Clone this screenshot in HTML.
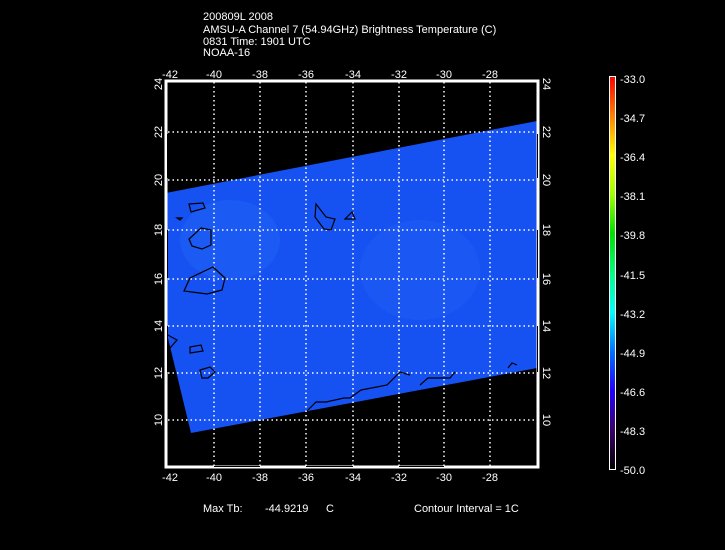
<html><head><style>body{margin:0;background:#000;width:725px;height:550px;overflow:hidden}
text{font-family:"Liberation Sans",sans-serif;font-size:11px;fill:#fff}</style></head><body>
<svg width="725" height="550" xmlns="http://www.w3.org/2000/svg">
<defs>
<linearGradient id="cb" x1="0" y1="1" x2="0" y2="0">
<stop offset="0" stop-color="#000"/><stop offset="0.1" stop-color="#3a0066"/><stop offset="0.2" stop-color="#2000ff"/><stop offset="0.3" stop-color="#0070ff"/><stop offset="0.4" stop-color="#00ffff"/><stop offset="0.5" stop-color="#00ff80"/><stop offset="0.6" stop-color="#00e000"/><stop offset="0.7" stop-color="#a0ff00"/><stop offset="0.8" stop-color="#ffff00"/><stop offset="0.9" stop-color="#ff8000"/><stop offset="1" stop-color="#ff0000"/>
</linearGradient>
</defs>
<text x="203" y="20">200809L 2008</text>
<text x="203" y="33">AMSU-A Channel 7 (54.94GHz) Brightness Temperature (C)</text>
<text x="203" y="45">0831 Time: 1901 UTC</text>
<text x="203" y="56">NOAA-16</text>
<polygon points="166,193 537,121 537,368 191,433 166,330" fill="#1652f2"/>
<ellipse cx="230" cy="240" rx="50" ry="40" fill="#2262f6" opacity="0.5"/>
<ellipse cx="420" cy="270" rx="60" ry="50" fill="#2262f6" opacity="0.4"/>
<g stroke="#fff" stroke-width="1.5" stroke-dasharray="1.5,3" fill="none">
<path d="M214 82V466M260 82V466M306 82V466M353 82V466M399 82V466M444 82V466M490 82V466"/>
<path d="M168 132H536M168 180H536M168 230H536M168 279H536M168 326H536M168 373H536M168 420H536"/>
</g>
<g stroke="#000" stroke-width="1.2" fill="none">
<path d="M189 204L203 203L205 208L191 212Z"/><path d="M177 218L182 218L180 220Z"/>
<path d="M201 228L211 230L211 245L202 249L192 246L189 239Z"/>
<path d="M213 267L225 278L222 290L207 294L184 291L190 278Z"/>
<path d="M316 204L326 217L335 219L331 230L324 229L315 217Z"/><path d="M352 212L355 219L345 219Z"/>
<path d="M190 347L201 345L203 351L190 353Z"/><path d="M200 370L210 367L215 372L208 378L202 378Z"/>
<path d="M166 334L177 340L170 348"/>
<path d="M307 411L316 402L326 402L344 398L350 398L361 390L387 385L400 372L410 375"/>
<path d="M420 385L428 378L450 378L455 372"/><path d="M508 368L512 363L517 365"/>
</g>
<rect x="166" y="81" width="372" height="386" stroke-width="3" fill="none" stroke="#fff"/>
<g stroke="#000" stroke-width="1"><path d="M537.5 134V178M537.5 230V278M537.5 326V372M167.5 134V178M167.5 230V278M167.5 326V372"/><path d="M214 466.5H260M306 466.5H353M399 466.5H444"/></g>
<g text-anchor="middle">
<text x="170" y="78">-42</text><text x="214" y="78">-40</text><text x="260" y="78">-38</text><text x="306" y="78">-36</text><text x="353" y="78">-34</text><text x="399" y="78">-32</text><text x="444" y="78">-30</text><text x="490" y="78">-28</text>
<text x="170" y="481">-42</text><text x="214" y="481">-40</text><text x="260" y="481">-38</text><text x="306" y="481">-36</text><text x="353" y="481">-34</text><text x="399" y="481">-32</text><text x="444" y="481">-30</text><text x="490" y="481">-28</text>
</g>
<g text-anchor="middle">
<text transform="translate(162,84) rotate(-90)">24</text><text transform="translate(162,132) rotate(-90)">22</text><text transform="translate(162,180) rotate(-90)">20</text><text transform="translate(162,230) rotate(-90)">18</text><text transform="translate(162,279) rotate(-90)">16</text><text transform="translate(162,326) rotate(-90)">14</text><text transform="translate(162,373) rotate(-90)">12</text><text transform="translate(162,420) rotate(-90)">10</text>
<text transform="translate(543,84) rotate(90)">24</text><text transform="translate(543,132) rotate(90)">22</text><text transform="translate(543,180) rotate(90)">20</text><text transform="translate(543,230) rotate(90)">18</text><text transform="translate(543,279) rotate(90)">16</text><text transform="translate(543,326) rotate(90)">14</text><text transform="translate(543,373) rotate(90)">12</text><text transform="translate(543,420) rotate(90)">10</text>
</g>
<rect x="609.5" y="76.5" width="6" height="393" fill="url(#cb)" stroke="#fff"/>
<g>
<text x="620" y="83">-33.0</text><text x="620" y="122">-34.7</text><text x="620" y="161">-36.4</text><text x="620" y="200">-38.1</text><text x="620" y="239">-39.8</text><text x="620" y="279">-41.5</text><text x="620" y="318">-43.2</text><text x="620" y="357">-44.9</text><text x="620" y="396">-46.6</text><text x="620" y="435">-48.3</text><text x="620" y="474">-50.0</text>
</g>
<text x="203" y="512">Max Tb:</text><text x="265" y="512">-44.9219</text><text x="326" y="512">C</text>
<text x="414" y="512">Contour Interval = 1C</text>
</svg></body></html>
